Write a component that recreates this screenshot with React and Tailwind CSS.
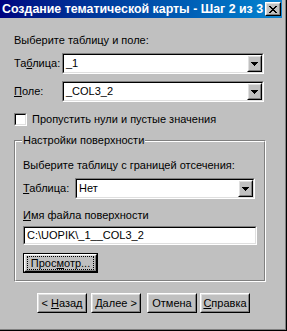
import React from 'react';

const font = { fontFamily: '"Liberation Sans", Arial, sans-serif' };

// sunken white field (combo / edit / checkbox)
const Sunken = ({ className = '', children }) => (
  <div className={`border border-t-[#808080] border-l-[#808080] border-b-white border-r-white ${className}`}>
    <div className="flex h-full w-full items-center border border-t-black border-l-black border-b-[#dfdfdf] border-r-[#dfdfdf] bg-white">
      {children}
    </div>
  </div>
);

const Raised = ({ className = '', children }) => (
  <div className={`border border-t-white border-l-white border-b-black border-r-black ${className}`}>
    <div className="flex h-full w-full items-center justify-center border border-t-[#dfdfdf] border-l-[#dfdfdf] border-b-[#808080] border-r-[#808080] bg-[#c0c0c0]">
      {children}
    </div>
  </div>
);

const Arrow = () => (
  <svg width="7" height="4" viewBox="0 0 7 4" shapeRendering="crispEdges">
    <path d="M0 0h7v1H0zM1 1h5v1H1zM2 2h3v1H2zM3 3h1v1H3z" fill="#000" />
  </svg>
);

const Combo = ({ value, className = '' }) => (
  <Sunken className={`h-[21px] ${className}`}>
    <span className="flex-1 pl-[2px] leading-[13px]">{value}</span>
    <div className="flex h-full w-[15px] items-stretch">
      <Raised className="w-full">
        <Arrow />
      </Raised>
    </div>
  </Sunken>
);

const Btn = ({ className = '', children }) => (
  <Raised className={`h-[20px] ${className}`}>
    <span className="leading-[13px]">{children}</span>
  </Raised>
);

export default function App() {
  return (
    <div className="h-[331px] w-[287px] bg-black pb-px pr-px text-[11px] text-black" style={font}>
      <div className="h-full w-full bg-[#808080] pb-px pr-px">
        <div className="flex h-full w-full flex-col bg-[#c0c0c0] pr-[3px]">
          {/* title bar */}
          <div className="flex h-[18px] items-center bg-gradient-to-r from-[#000080] to-[#1084d0] pl-[2px] pr-[1px]">
            <span className="flex-1 whitespace-nowrap text-[12.4px] font-bold leading-[14px] text-white">
              Создание тематической карты - Шаг 2 из 3
            </span>
            <Raised className="h-[14px] w-[16px]">
              <svg width="8" height="7" viewBox="0 0 8 7" shapeRendering="crispEdges">
                <path d="M0 0h2v1H0zM6 0h2v1H6zM1 1h2v1H1zM5 1h2v1H5zM2 2h4v1H2zM3 3h2v1H3zM2 4h4v1H2zM1 5h2v1H1zM5 5h2v1H5zM0 6h2v1H0zM6 6h2v1H6z" fill="#000" />
              </svg>
            </Raised>
          </div>

          <div className="flex flex-col pl-[14px] pt-[16px]">
            <div className="h-[13px] leading-[13px]">Выберите таблицу и поле:</div>

            <div className="mt-[6px] flex items-center">
              <span className="w-[48px] leading-[13px]">
                Та<u>б</u>лица:
              </span>
              <Combo value="_1" className="w-[202px]" />
            </div>
            <div className="mt-[7px] flex items-center">
              <span className="w-[48px] leading-[13px]">
                <u>П</u>оле:
              </span>
              <Combo value="_COL3_2" className="w-[202px]" />
            </div>

            <div className="mt-[11px] flex items-center">
              <Sunken className="h-[13px] w-[13px]" />
              <span className="ml-[5px] leading-[13px]">Пропустить нули и пустые значения</span>
            </div>

            {/* group box */}
            <div className="relative mt-[14px] h-[142px] w-[252px] border border-t-[#808080] border-l-[#808080] border-b-white border-r-white">
              <div className="flex h-full w-full flex-col border border-t-white border-l-white border-b-[#808080] border-r-[#808080] pl-[7px] pt-[17px]">
                <div className="h-[13px] leading-[13px]">Выберите таблицу с границей отсечения:</div>
                <div className="mt-[6px] flex items-center">
                  <span className="w-[52px] leading-[13px]">
                    <u>Т</u>аблица:
                  </span>
                  <Combo value="Нет" className="w-[180px]" />
                </div>
                <div className="mt-[10px] h-[13px] leading-[13px]">
                  <u>И</u>мя файла поверхности
                </div>
                <Sunken className="mt-[4px] h-[19px] w-[234px]">
                  <span className="pl-[2px] leading-[13px]">C:\UOPIK\_1__COL3_2</span>
                </Sunken>
                <div className="mt-[8px] w-[75px] border border-black">
                  <Raised className="h-[18px]">
                    <span className="mx-px flex flex-1 self-stretch items-center justify-center border border-dotted border-black leading-[12px]">
                      <span>
                        Прос<u>м</u>отр...
                      </span>
                    </span>
                  </Raised>
                </div>
              </div>
              <span className="absolute left-[7px] top-[-7px] bg-[#c0c0c0] px-px leading-[13px]">
                Настройки поверхности
              </span>
            </div>

            {/* wizard buttons */}
            <div className="mt-[11px] flex pl-[23px]">
              <Btn className="w-[50px]">
                &lt; <u>Н</u>азад
              </Btn>
              <Btn className="ml-[4px] w-[50px]">
                <u>Д</u>алее &gt;
              </Btn>
              <Btn className="ml-[6px] w-[50px]">Отмена</Btn>
              <Btn className="ml-[3px] w-[50px]">
                <u>С</u>правка
              </Btn>
            </div>
          </div>
        </div>
      </div>
    </div>
  );
}
